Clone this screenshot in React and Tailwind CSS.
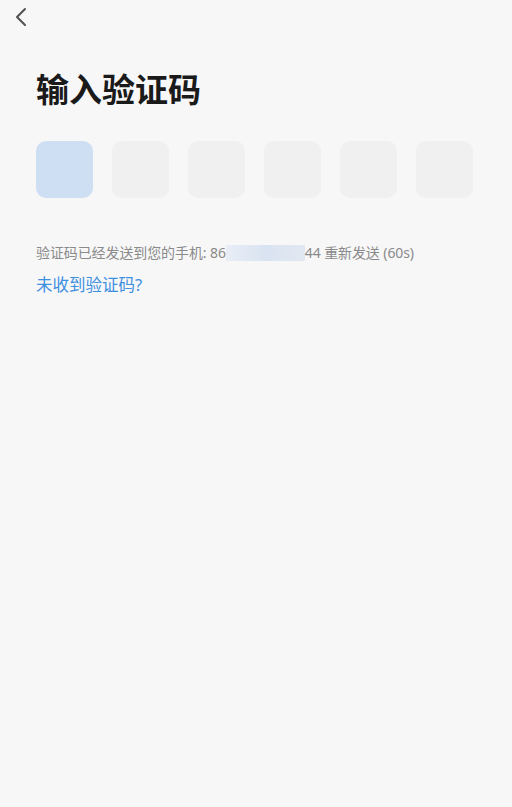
import { useState } from "react";

function BackIcon() {
  return (
    <svg width="15" height="20" viewBox="0 0 15 20" fill="none">
      <path
        d="M12 2 L4 10 L12 18"
        stroke="#505050"
        strokeWidth="2"
        strokeLinecap="round"
        strokeLinejoin="round"
      />
    </svg>
  );
}

export default function App() {
  const [code] = useState(["", "", "", "", "", ""]);
  const active = 0;

  return (
    <div
      className="w-[512px] h-[807px] bg-[#f7f7f8] flex flex-col"
      style={{ fontFamily: '"Noto Sans", "Noto Sans CJK SC", sans-serif' }}
    >
      <div className="h-[34px] pl-[13px] pt-[7px]">
        <BackIcon />
      </div>

      <div className="px-[36px]">
        <h1 className="mt-[36px] text-[33px] leading-[40px] font-bold text-[#1a1a1a]">
          输入验证码
        </h1>

        <div className="mt-[31px] flex gap-[19px]">
          {code.map((c, i) => (
            <div
              key={i}
              className={`w-[57px] h-[57px] rounded-[10px] ${
                i === active ? "bg-[#cfdff3]" : "bg-[#f0f0f0]"
              }`}
            >
              {c}
            </div>
          ))}
        </div>

        <p className="mt-[43px] text-[14px] leading-[24px] text-[#8a8a8a] flex items-center whitespace-nowrap tracking-[-0.1px]">
          验证码已经发送到您的手机: 86
          <span className="inline-block w-[79px] h-[16px] bg-gradient-to-r from-[#e9eef6] via-[#d9e3f1] to-[#e2e8f1]" />
          44 重新发送 (60s)
        </p>

        <p className="mt-[8px] text-[16.5px] leading-[24px] text-[#3d8fe0]">
          未收到验证码?
        </p>
      </div>
    </div>
  );
}
